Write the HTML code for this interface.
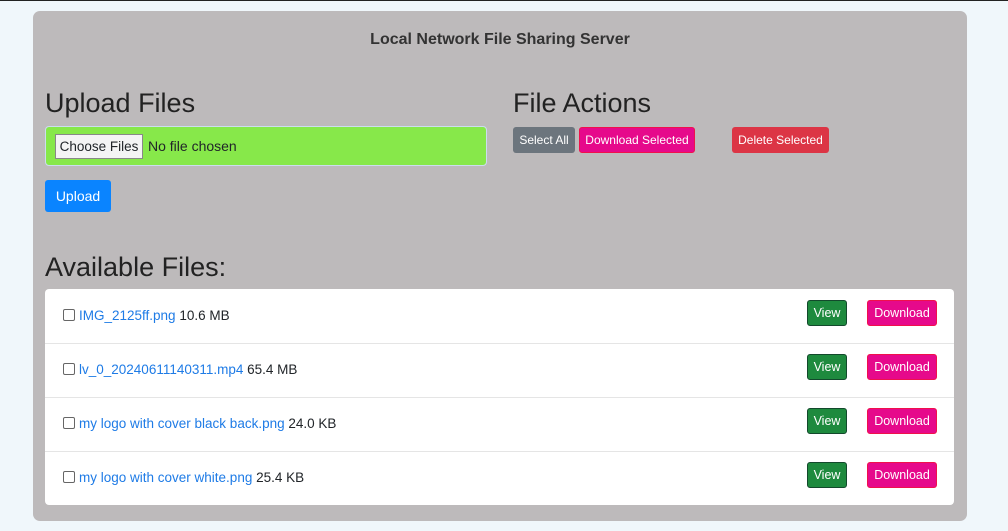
<!DOCTYPE html>
<html><head><style>
body{margin:0;width:1008px;height:531px;background:#f0f7fb;font-family:"Liberation Sans",sans-serif;color:#212529;overflow:hidden;position:relative;border-top:1px solid #222;box-sizing:border-box}
.c{position:absolute;left:33px;top:10px;width:934px;height:510px;background:#bdbabb;border-radius:7px}
.a{position:absolute}
.t{left:0;width:934px;top:20px;text-align:center;font-size:16px;font-weight:bold;color:#333}
h2{margin:0;font-weight:normal;font-size:27px;position:absolute;color:#222}
.btn{position:absolute;color:#fff;font-size:12px;border-radius:3px;text-align:center;box-sizing:border-box}
.list{left:12px;top:277px;width:909px;height:216px;background:#fff;border-radius:4px}
.row{position:absolute;left:0;width:909px;height:54px;border-bottom:1px solid #e5e5e5;font-size:13.5px}
.row .n{position:absolute;left:18px;top:19px}
.cb{display:inline-block;width:10px;height:10px;border:1px solid #666;border-radius:2px;vertical-align:-1px;margin-right:4px}
a{color:#1e7be6;text-decoration:none}
.v{left:762px;top:11px;width:40px;height:26px;line-height:24px;background:#1e8a3e;border:1px solid #13492c;font-size:12.5px}
.d{left:822px;top:11px;width:70px;height:26px;line-height:24px;background:#e6098b;border:1px solid #f0104c;font-size:12.5px}
</style></head><body>
<div class="c">
<div class="a t">Local Network File Sharing Server</div>
<h2 style="left:12px;top:77px">Upload Files</h2>
<h2 style="left:480px;top:77px">File Actions</h2>
<div class="a" style="left:12px;top:115px;width:442px;height:40px;background:#87e84a;border:1px solid #cde;border-radius:4px;box-sizing:border-box"></div>
<div class="a" style="left:22px;top:123px;width:88px;height:25px;background:#f4f4f4;border:1px solid #888;font-size:13.5px;line-height:23px;text-align:center;box-sizing:border-box">Choose Files</div>
<div class="a" style="left:115px;top:127px;font-size:14px">No file chosen</div>
<div class="btn" style="left:12px;top:169px;width:66px;height:32px;line-height:32px;background:#0a84ff;font-size:14px">Upload</div>
<div class="btn" style="left:480px;top:116px;width:62px;height:26px;line-height:26px;background:#6c757d">Select All</div>
<div class="btn" style="left:546px;top:116px;width:116px;height:26px;line-height:24px;background:#e6098b;border:1px solid #f0104c">Download Selected</div>
<div class="btn" style="left:699px;top:116px;width:97px;height:26px;line-height:26px;background:#dc3545">Delete Selected</div>
<h2 style="left:12px;top:241px">Available Files:</h2>
<div class="a list" style="top:278px">
<div class="row" style="top:0"><div class="n"><span class="cb"></span><a>IMG_2125ff.png</a> 10.6 MB</div><div class="btn v">View</div><div class="btn d">Download</div></div>
<div class="row" style="top:54px"><div class="n"><span class="cb"></span><a>lv_0_20240611140311.mp4</a> 65.4 MB</div><div class="btn v">View</div><div class="btn d">Download</div></div>
<div class="row" style="top:108px"><div class="n"><span class="cb"></span><a>my logo with cover black back.png</a> 24.0 KB</div><div class="btn v">View</div><div class="btn d">Download</div></div>
<div class="row" style="top:162px;border:none"><div class="n"><span class="cb"></span><a>my logo with cover white.png</a> 25.4 KB</div><div class="btn v">View</div><div class="btn d">Download</div></div>
</div>
</div>
</body></html>
